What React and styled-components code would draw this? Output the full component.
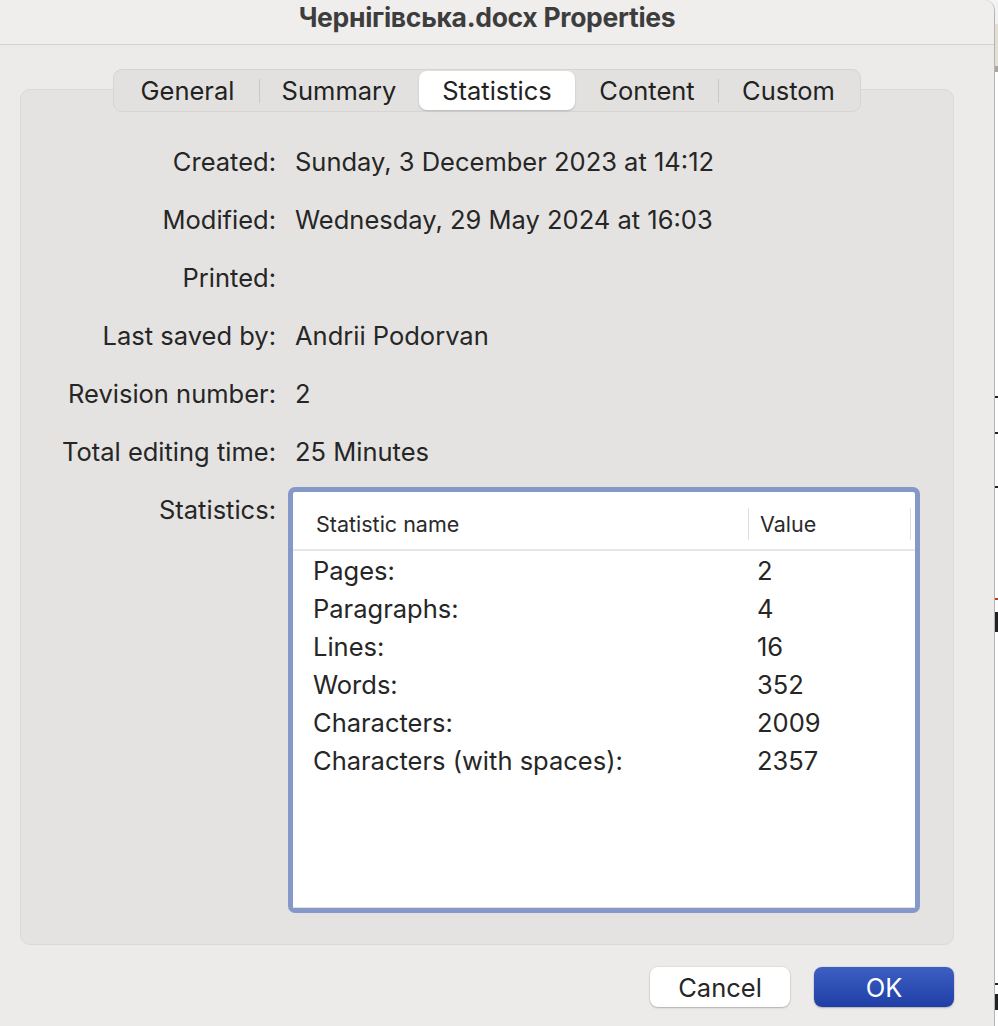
import React from 'react';
import styled, { createGlobalStyle } from 'styled-components';

const GlobalStyle = createGlobalStyle`
  html, body {
    margin: 0;
    padding: 0;
    background: #f4f4f4;
  }
  body {
    font-family: Inter, "Noto Sans", "Liberation Sans", sans-serif;
    color: #262626;
    -webkit-font-smoothing: antialiased;
  }
`;

const Screen = styled.div`
  display: flex;
  width: 998px;
  height: 1026px;
  overflow: hidden;
`;

const Window = styled.div`
  width: 994px;
  flex: none;
  display: flex;
  flex-direction: column;
  background: #ecebea;
  border-right: 1px solid #b4b4b4;
  border-top-right-radius: 10px;
`;

const TitleBar = styled.div`
  height: 45px;
  flex: none;
  display: flex;
  align-items: center;
  justify-content: center;
  background: #efeeed;
  border-bottom: 1px solid #d3d2d1;
  border-top-right-radius: 10px;
  padding: 0 20px 10px 0;
  box-sizing: border-box;
  font-size: 26.5px;
  font-weight: 700;
  color: #3d3d3d;
  letter-spacing: -0.3px;
`;

const Body = styled.div`
  flex: 1;
  display: flex;
  flex-direction: column;
  padding: 24px 40px 0 20px;
`;

const TabRow = styled.div`
  display: flex;
  justify-content: center;
  margin-bottom: -23px;
  position: relative;
  z-index: 1;
`;

const Tabs = styled.div`
  display: flex;
  align-items: center;
  height: 43px;
  box-sizing: border-box;
  padding: 0 2px;
  background: #e2e1e0;
  border: 1px solid #d6d5d4;
  border-radius: 9px;
`;

const Tab = styled.div`
  height: 39px;
  width: ${p => p.$w}px;
  display: flex;
  align-items: center;
  justify-content: center;
  font-size: 25.5px;
  color: #222;
  border-radius: 8px;
  background: ${p => (p.$active ? '#ffffff' : 'transparent')};
  box-shadow: ${p => (p.$active ? '0 1px 2px rgba(0,0,0,0.18)' : 'none')};
`;

const TabSep = styled.div`
  width: 1px;
  height: 24px;
  background: ${p => (p.$hidden ? 'transparent' : '#c9c8c7')};
`;

const Panel = styled.div`
  width: 934px;
  height: 856px;
  box-sizing: border-box;
  background: #e4e3e2;
  border: 1px solid #dad9d8;
  border-radius: 10px;
  padding-top: 43px;
`;

const Grid = styled.div`
  display: grid;
  grid-template-columns: 255px 1fr;
  column-gap: 19px;
  grid-auto-rows: 58px;
  font-size: 25.5px;
  line-height: 58px;
`;

const Label = styled.div`
  text-align: right;
  color: #262626;
  white-space: nowrap;
`;

const Value = styled.div`
  color: #262626;
  white-space: nowrap;
`;

const TableBox = styled.div`
  margin: 6px 0 0 -7px;
  width: 632px;
  height: 426px;
  box-sizing: border-box;
  border: 5px solid #8499c8;
  border-radius: 7px;
  background: #fff;
  line-height: normal;
  display: flex;
  flex-direction: column;
`;

const HeadRow = styled.div`
  height: 59px;
  box-sizing: border-box;
  padding-top: 6px;
  flex: none;
  display: flex;
  align-items: center;
  border-bottom: 2px solid #e6e6e6;
  font-size: 21.5px;
  color: #2a2a2a;
`;

const HeadCell = styled.div`
  width: ${p => p.$w}px;
  box-sizing: border-box;
  padding-left: ${p => p.$pad}px;
  height: 32px;
  display: flex;
  align-items: center;
  border-right: 1px solid ${p => (p.$sep ? '#dedede' : 'transparent')};
`;

const Rows = styled.div`
  flex: 1;
  border-bottom: 1px solid #e2e2e2;
`;

const Row = styled.div`
  display: flex;
  height: 38px;
  align-items: center;
  font-size: 25.5px;
  color: #262626;
`;

const NameCell = styled.div`
  width: 464px;
  box-sizing: border-box;
  padding-left: 20px;
`;

const ValCell = styled.div`
  flex: 1;
`;

const Footer = styled.div`
  display: flex;
  justify-content: flex-end;
  gap: 24px;
  width: 934px;
  padding-top: 22px;
`;

const Button = styled.div`
  width: 140px;
  height: 40px;
  box-sizing: border-box;
  border-radius: 8px;
  display: flex;
  align-items: center;
  justify-content: center;
  font-size: 25.5px;
  color: ${p => (p.$primary ? '#fff' : '#262626')};
  background: ${p =>
    p.$primary ? 'linear-gradient(#3d5fc2, #1f3fa6)' : '#ffffff'};
  box-shadow: 0 1px 2px rgba(0, 0, 0, 0.22), 0 0 0 0.5px rgba(0, 0, 0, 0.08);
`;

const Backdrop = styled.div`
  flex: 1;
  background: #f6f6f6;
`;

const tabs = [
  { name: 'General', w: 143 },
  { name: 'Summary', w: 158 },
  { name: 'Statistics', w: 156, active: true },
  { name: 'Content', w: 142 },
  { name: 'Custom', w: 139 },
];

const info = [
  ['Created:', 'Sunday, 3 December 2023 at 14:12'],
  ['Modified:', 'Wednesday, 29 May 2024 at 16:03'],
  ['Printed:', ''],
  ['Last saved by:', 'Andrii Podorvan'],
  ['Revision number:', '2'],
  ['Total editing time:', '25 Minutes'],
];

const stats = [
  ['Pages:', '2'],
  ['Paragraphs:', '4'],
  ['Lines:', '16'],
  ['Words:', '352'],
  ['Characters:', '2009'],
  ['Characters (with spaces):', '2357'],
];

function BackdropSliver() {
  return (
    <Backdrop>
      <svg width="3" height="1026" viewBox="0 0 3 1026">
        <rect x="0" y="0" width="3" height="24" fill="#f2f2f2" />
        <rect x="0" y="24" width="3" height="42" fill="#e4e0cf" />
        <rect x="0" y="66" width="3" height="6" fill="#a8a89e" />
        <rect x="0" y="72" width="3" height="954" fill="#ffffff" />
        <rect x="0" y="396" width="3" height="2" fill="#222" />
        <rect x="0" y="432" width="3" height="2" fill="#222" />
        <rect x="0" y="486" width="3" height="2" fill="#222" />
        <rect x="0" y="598" width="3" height="2" fill="#c0392b" />
        <rect x="0" y="612" width="3" height="20" fill="#222" />
        <rect x="0" y="983" width="3" height="2" fill="#222" />
        <rect x="0" y="994" width="3" height="16" fill="#222" />
      </svg>
    </Backdrop>
  );
}

export default function App() {
  return (
    <>
      <GlobalStyle />
      <Screen>
        <Window>
          <TitleBar>Чернігівська.docx Properties</TitleBar>
          <Body>
            <TabRow>
              <Tabs>
                {tabs.map((t, i) => (
                  <React.Fragment key={t.name}>
                    {i > 0 && (
                      <TabSep $hidden={tabs[i - 1].active || t.active} />
                    )}
                    <Tab $w={t.w} $active={t.active}>
                      {t.name}
                    </Tab>
                  </React.Fragment>
                ))}
              </Tabs>
            </TabRow>
            <Panel>
              <Grid>
                {info.map(([k, v]) => (
                  <React.Fragment key={k}>
                    <Label>{k}</Label>
                    <Value>{v}</Value>
                  </React.Fragment>
                ))}
                <Label>Statistics:</Label>
                <div>
                  <TableBox>
                    <HeadRow>
                      <HeadCell $w={456} $pad={23} $sep>
                        Statistic name
                      </HeadCell>
                      <HeadCell $w={162} $pad={11} $sep>
                        Value
                      </HeadCell>
                    </HeadRow>
                    <Rows>
                      {stats.map(([k, v]) => (
                        <Row key={k}>
                          <NameCell>{k}</NameCell>
                          <ValCell>{v}</ValCell>
                        </Row>
                      ))}
                    </Rows>
                  </TableBox>
                </div>
              </Grid>
            </Panel>
            <Footer>
              <Button>Cancel</Button>
              <Button $primary>OK</Button>
            </Footer>
          </Body>
        </Window>
        <BackdropSliver />
      </Screen>
    </>
  );
}
